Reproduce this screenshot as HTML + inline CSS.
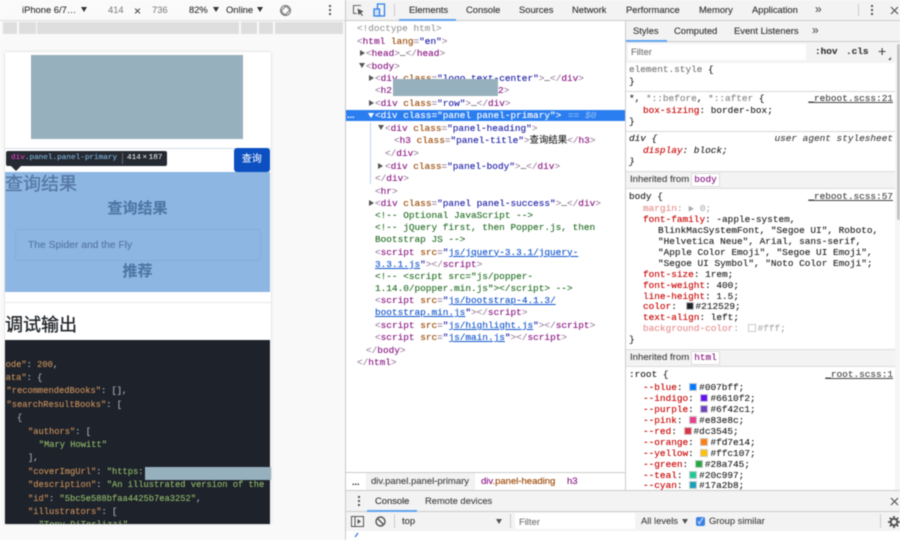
<!DOCTYPE html>
<html lang="zh"><head><meta charset="utf-8"><title>DevTools</title>
<style>
html,body{margin:0;padding:0;width:900px;height:540px;overflow:hidden;background:#fff}
#r{position:absolute;left:0;top:0;width:900px;height:540px;overflow:hidden;filter:blur(.4px);font-family:"Liberation Sans","Noto Sans CJK SC",sans-serif;font-size:9.4px;color:#333;-webkit-text-stroke:.12px}
#r div{position:absolute}
.s{white-space:pre;line-height:12px;height:12px}
.m{font-family:"Liberation Mono","Noto Sans CJK SC",monospace;font-size:9.42px;white-space:pre;line-height:12px;height:12px;color:#222;margin-top:.7px}
.t{color:#881280}.b{color:#9b7f9b}.a{color:#994500}.v{color:#1a1aa6}.c{color:#236e25}.k{color:#c80000}.g{color:#888}
u{color:#1155cc}
.sw{display:inline-block;width:8px;height:8px;margin:0 2px 0 1px;vertical-align:-1px;border:.5px solid #ccc;box-sizing:border-box}
.ln{background:#d8d8d8}
.y{color:#c8905a}.h{color:#8fb86a}.p{color:#aab2bf}
.code{color:#aab2bf;line-height:12px;height:12px;font-family:"Liberation Mono",monospace;font-size:8.75px;white-space:pre;margin-top:.7px}
.tri{width:0;height:0;border-left:3px solid transparent;border-right:3px solid transparent;border-top:5px solid #333}
.rt{width:0;height:0;border-top:3px solid transparent;border-bottom:3px solid transparent;border-left:5px solid #555}
.dn{width:0;height:0;border-left:3px solid transparent;border-right:3px solid transparent;border-top:5px solid #555}
</style></head><body><div id="r">

<!-- left device area -->
<div style="left:0;top:0;width:345px;height:540px;background:#f9f9f9"></div>
<div style="left:0;top:0;width:345px;height:20px;background:#fafafa;border-bottom:1px solid #ddd"></div>
<div class="s" style="left:22px;top:4px;color:#333">iPhone 6/7…</div><div class="tri" style="left:81px;top:7px"></div>
<div class="s" style="left:108px;top:4px;color:#888">414</div>
<div class="s" style="left:134px;top:5px;color:#444;font-size:12px">×</div>
<div class="s" style="left:152px;top:4px;color:#888">736</div>
<div class="s" style="left:189px;top:4px">82%</div><div class="tri" style="left:213px;top:7px"></div>
<div class="s" style="left:226px;top:4px">Online</div><div class="tri" style="left:257px;top:7px"></div>
<svg style="position:absolute;left:279px;top:4px" width="13" height="13" viewBox="0 0 13 13" fill="none" stroke="#777" stroke-width="1"><circle cx="6.5" cy="6.5" r="5"/><path d="M2 7L7 2L11 6L6 11Z"/></svg>
<div style="left:329px;top:5px;width:2px;height:2px;background:#555"></div><div style="left:329px;top:9px;width:2px;height:2px;background:#555"></div><div style="left:329px;top:13px;width:2px;height:2px;background:#555"></div>
<!-- ruler -->
<div style="left:3px;top:22px;width:14px;height:12px;background:#dedede"></div>
<div style="left:19px;top:22px;width:17px;height:12px;background:#dedede"></div>
<div style="left:37px;top:22px;width:202px;height:12px;background:#dedede"></div>
<div style="left:241px;top:22px;width:16px;height:12px;background:#dedede"></div>
<div style="left:259px;top:22px;width:14px;height:12px;background:#dedede"></div>
<div style="left:275px;top:22px;width:68px;height:12px;background:#dedede"></div>

<!-- page -->
<div style="left:5px;top:52px;width:266px;height:472px;background:#fff;box-shadow:0 0 2px rgba(0,0,0,.22);overflow:hidden">
  <div style="left:26px;top:3px;width:212px;height:84px;background:#96b0bd"></div>
  <div style="left:0;top:96px;width:266px;height:1px;background:#d5dde3"></div>
  <div style="left:228.5px;top:96px;width:36.5px;height:24px;background:#0b4fc0;border-radius:3px;color:#e8eefa;font-size:10px;line-height:24px;text-align:center">查询</div>
  <div style="left:0;top:120px;width:265px;height:120px;background:#8db6e3">
    <div style="left:0;top:0;font-size:18px;line-height:24px;color:#5678a3;white-space:pre;-webkit-text-stroke:.3px">查询结果</div>
    <div style="left:0;width:265px;top:26px;font-size:15px;line-height:22px;color:#4f75a3;font-weight:bold;text-align:center">查询结果</div>
    <div style="left:10px;top:57px;width:246px;height:32px;border:1px solid #84aedb;border-radius:3px;box-sizing:border-box"></div>
    <div style="left:23px;top:66.5px;font-size:10.3px;line-height:14px;color:#5878a5;white-space:pre">The Spider and the Fly</div>
    <div style="left:0;width:265px;top:89px;font-size:15px;line-height:22px;color:#4f75a3;font-weight:bold;text-align:center">推荐</div>
  </div>
  <div style="left:0;top:250px;width:266px;height:1px;background:#e8e8e8"></div>
  <div style="left:0;top:261px;font-size:18px;line-height:24px;color:#212529;white-space:pre;-webkit-text-stroke:.3px">调试输出</div>
  <div style="left:0;top:288px;width:265px;height:184px;background:#1e222b;overflow:hidden">
    <div class="code" style="left:-9.9px;top:18px"><span class="y">"code"</span>: <span class="y">200</span>,</div>
    <div class="code" style="left:-9.9px;top:31.4px"><span class="y">"data"</span>: {</div>
    <div class="code" style="left:1.5px;top:44.8px"><span class="y">"recommendedBooks"</span>: [],</div>
    <div class="code" style="left:1.5px;top:58.2px"><span class="y">"searchResultBooks"</span>: [</div>
    <div class="code" style="left:12px;top:71.6px">{</div>
    <div class="code" style="left:23px;top:85px"><span class="y">"authors"</span>: [</div>
    <div class="code" style="left:33.7px;top:98.4px"><span class="h">"Mary Howitt"</span></div>
    <div class="code" style="left:23px;top:111.8px">],</div>
    <div class="code" style="left:23px;top:125.2px"><span class="y">"coverImgUrl"</span>: <span class="h">"https:</span></div>
    <div class="code" style="left:23px;top:138.6px"><span class="y">"description"</span>: <span class="h">"An illustrated version of the classic</span></div>
    <div class="code" style="left:23px;top:152px"><span class="y">"id"</span>: <span class="h">"5bc5e588bfaa4425b7ea3252"</span>,</div>
    <div class="code" style="left:23px;top:165.4px"><span class="y">"illustrators"</span>: [</div>
    <div class="code" style="left:33.7px;top:178.8px"><span class="h">"Tony DiTerlizzi"</span></div>
  </div>
</div>
<div style="left:145px;top:467px;width:126px;height:12.5px;background:#96b0bd"></div>
<!-- tooltip -->
<div class="m" style="left:6px;top:151px;margin-top:0;width:161px;height:15px;background:#252a33;border-radius:2px;line-height:15px;color:#ddd;font-size:7.7px"><span style="position:absolute;left:5px"><span style="color:#e23fc0">div</span><span style="color:#7fb3d8">.panel.panel-primary</span></span><span style="position:absolute;left:116px;top:2px;width:1px;height:11px;background:#666"></span><span style="position:absolute;left:121px;word-spacing:-3px">414 × 187</span></div>
<div style="left:11px;top:166px;width:0;height:0;border-left:5px solid transparent;border-right:5px solid transparent;border-top:5px solid #252a33"></div>

<!-- devtools top -->
<div style="left:345px;top:0;width:1px;height:540px;background:#c8c8c8"></div>
<div style="left:346px;top:0;width:554px;height:20px;background:#f3f3f3;border-bottom:1px solid #ccc"></div>
<svg style="position:absolute;left:352px;top:4px" width="13" height="13" viewBox="0 0 13 13" fill="none"><path d="M9 1.5H1.5V9.5H5" stroke="#666" stroke-width="1.1"/><path d="M5.5 4.5L11.5 7.5L9 8.7L11 11.5L10 12L8 9.5L6.5 11.2Z" fill="#555"/></svg>
<svg style="position:absolute;left:373px;top:3px" width="13" height="14" viewBox="0 0 13 14" fill="none" stroke="#2f7fe6" stroke-width="1.3"><path d="M4.5 1H11.5V13H4.5V1Z"/><path d="M1 6H6.5V13H1V6Z" fill="#cfe2fa"/></svg>
<div style="left:394px;top:4px;width:1px;height:12px;background:#ccc"></div>
<div class="s" style="left:409px;top:4px;color:#333">Elements</div>
<div style="left:399px;top:19px;width:57px;height:2px;background:#5fa3ee"></div>
<div class="s" style="left:466px;top:4px">Console</div>
<div class="s" style="left:519px;top:4px">Sources</div>
<div class="s" style="left:572px;top:4px">Network</div>
<div class="s" style="left:626px;top:4px">Performance</div>
<div class="s" style="left:699px;top:4px">Memory</div>
<div class="s" style="left:752px;top:4px">Application</div>
<div class="s" style="left:815px;top:3px;font-size:12px;color:#555">»</div>
<div style="left:858px;top:4px;width:1px;height:12px;background:#ccc"></div>
<div style="left:871px;top:5px;width:2px;height:2px;background:#555"></div><div style="left:871px;top:9px;width:2px;height:2px;background:#555"></div><div style="left:871px;top:13px;width:2px;height:2px;background:#555"></div>
<svg style="position:absolute;left:890px;top:6px" width="9" height="9" viewBox="0 0 9 9" stroke="#555" stroke-width="1.2"><path d="M1 1L8 8M8 1L1 8"/></svg>

<!-- DOM panel -->
<div style="left:346px;top:21px;width:279px;height:451px;background:#fff"></div>
<div style="left:625px;top:21px;width:1px;height:469px;background:#ccc"></div>
<div style="left:346px;top:110px;width:279px;height:11px;background:#2b7ef0"></div>
<div style="left:370px;top:122px;width:1px;height:62px;background:#bcd4f2"></div>

<div class="m" style="left:357px;top:22px;color:#999">&lt;!doctype html&gt;</div>
<div class="m" style="left:357px;top:35px"><span class="b">&lt;</span><span class="t">html</span> <span class="a">lang</span><span class="b">=</span><span class="v">"en"</span><span class="b">&gt;</span></div>
<div class="rt" style="left:360px;top:50px"></div>
<div class="m" style="left:366px;top:47px"><span class="b">&lt;</span><span class="t">head</span><span class="b">&gt;</span>…<span class="b">&lt;/</span><span class="t">head</span><span class="b">&gt;</span></div>
<div class="dn" style="left:359px;top:63px"></div>
<div class="m" style="left:366px;top:60px"><span class="b">&lt;</span><span class="t">body</span><span class="b">&gt;</span></div>
<div class="rt" style="left:369px;top:75px"></div>
<div class="m" style="left:375px;top:72px"><span class="b">&lt;</span><span class="t">div</span> <span class="a">class</span><span class="b">=</span><span class="v">"logo text-center"</span><span class="b">&gt;</span>…<span class="b">&lt;/</span><span class="t">div</span><span class="b">&gt;</span></div>
<div class="m" style="left:375px;top:84px"><span class="b">&lt;</span><span class="t">h2</span></div>
<div class="m" style="left:498px;top:84px"><span class="t">2</span><span class="b">&gt;</span></div>
<div style="left:393px;top:79px;width:105px;height:17px;background:#96b0bd"></div>
<div class="rt" style="left:369px;top:100px"></div>
<div class="m" style="left:375px;top:97px"><span class="b">&lt;</span><span class="t">div</span> <span class="a">class</span><span class="b">=</span><span class="v">"row"</span><span class="b">&gt;</span>…<span class="b">&lt;/</span><span class="t">div</span><span class="b">&gt;</span></div>

<div class="s" style="left:347px;top:109px;color:#fff;font-size:9px;font-weight:bold">...</div>
<div style="left:368px;top:113px;width:0;height:0;border-left:3px solid transparent;border-right:3px solid transparent;border-top:5px solid #fff"></div>
<div class="m" style="left:375px;top:109.5px;color:#fff">&lt;div class="panel panel-primary"&gt;</div>
<div class="m" style="left:568px;top:109.5px;color:#8fbaf5">== <i>$0</i></div>

<div class="dn" style="left:378px;top:125px"></div>
<div class="m" style="left:385px;top:122px"><span class="b">&lt;</span><span class="t">div</span> <span class="a">class</span><span class="b">=</span><span class="v">"panel-heading"</span><span class="b">&gt;</span></div>
<div class="m" style="left:394px;top:134.5px"><span class="b">&lt;</span><span class="t">h3</span> <span class="a">class</span><span class="b">=</span><span class="v">"panel-title"</span><span class="b">&gt;</span>查询结果<span class="b">&lt;/</span><span class="t">h3</span><span class="b">&gt;</span></div>
<div class="m" style="left:385px;top:147px"><span class="b">&lt;/</span><span class="t">div</span><span class="b">&gt;</span></div>
<div class="rt" style="left:378px;top:163px"></div>
<div class="m" style="left:385px;top:160px"><span class="b">&lt;</span><span class="t">div</span> <span class="a">class</span><span class="b">=</span><span class="v">"panel-body"</span><span class="b">&gt;</span>…<span class="b">&lt;/</span><span class="t">div</span><span class="b">&gt;</span></div>
<div class="m" style="left:375px;top:172px"><span class="b">&lt;/</span><span class="t">div</span><span class="b">&gt;</span></div>
<div class="m" style="left:375px;top:185px"><span class="b">&lt;</span><span class="t">hr</span><span class="b">&gt;</span></div>
<div class="rt" style="left:369px;top:200px"></div>
<div class="m" style="left:375px;top:197px"><span class="b">&lt;</span><span class="t">div</span> <span class="a">class</span><span class="b">=</span><span class="v">"panel panel-success"</span><span class="b">&gt;</span>…<span class="b">&lt;/</span><span class="t">div</span><span class="b">&gt;</span></div>
<div class="m c" style="left:375px;top:209.5px;color:#236e25">&lt;!-- Optional JavaScript --&gt;</div>
<div class="m c" style="left:375px;top:221.5px;color:#236e25">&lt;!-- jQuery first, then Popper.js, then</div>
<div class="m c" style="left:375px;top:233.5px;color:#236e25">Bootstrap JS --&gt;</div>
<div class="m" style="left:375px;top:246px"><span class="b">&lt;</span><span class="t">script</span> <span class="a">src</span><span class="b">=</span><span class="v">"</span><u>js/jquery-3.3.1/jquery-</u></div>
<div class="m" style="left:375px;top:258px"><u>3.3.1.js</u><span class="v">"</span><span class="b">&gt;&lt;/</span><span class="t">script</span><span class="b">&gt;</span></div>
<div class="m c" style="left:375px;top:270.5px;color:#236e25">&lt;!-- &lt;script src="js/popper-</div>
<div class="m c" style="left:375px;top:282px;color:#236e25">1.14.0/popper.min.js"&gt;&lt;/script&gt; --&gt;</div>
<div class="m" style="left:375px;top:294.5px"><span class="b">&lt;</span><span class="t">script</span> <span class="a">src</span><span class="b">=</span><span class="v">"</span><u>js/bootstrap-4.1.3/</u></div>
<div class="m" style="left:375px;top:306.5px"><u>bootstrap.min.js</u><span class="v">"</span><span class="b">&gt;&lt;/</span><span class="t">script</span><span class="b">&gt;</span></div>
<div class="m" style="left:375px;top:319px"><span class="b">&lt;</span><span class="t">script</span> <span class="a">src</span><span class="b">=</span><span class="v">"</span><u>js/highlight.js</u><span class="v">"</span><span class="b">&gt;&lt;/</span><span class="t">script</span><span class="b">&gt;</span></div>
<div class="m" style="left:375px;top:331.5px"><span class="b">&lt;</span><span class="t">script</span> <span class="a">src</span><span class="b">=</span><span class="v">"</span><u>js/main.js</u><span class="v">"</span><span class="b">&gt;&lt;/</span><span class="t">script</span><span class="b">&gt;</span></div>
<div class="m" style="left:366px;top:344px"><span class="b">&lt;/</span><span class="t">body</span><span class="b">&gt;</span></div>
<div class="m" style="left:357px;top:356px"><span class="b">&lt;/</span><span class="t">html</span><span class="b">&gt;</span></div>

<!-- breadcrumbs -->
<div style="left:346px;top:472px;width:279px;height:1px;background:#ccc"></div>
<div style="left:346px;top:473px;width:279px;height:17px;background:#fff"></div>
<div class="s" style="left:352px;top:476px;font-weight:bold;font-size:9px">...</div>
<div style="left:366px;top:473px;width:109px;height:17px;background:#f2f2f2"></div>
<div class="s" style="left:371px;top:476px;color:#444;font-size:9.5px">div.panel.panel-primary</div>
<div class="s" style="left:481px;top:476px;font-size:9.5px"><span class="t">div</span><span class="a">.panel-heading</span></div>
<div class="s t" style="left:567px;top:476px;font-size:9.5px;color:#881280">h3</div>

<!-- styles panel -->
<div style="left:626px;top:21px;width:274px;height:469px;background:#fff"></div>
<div style="left:626px;top:21px;width:274px;height:20px;background:#f3f3f3;border-bottom:1px solid #ccc"></div>
<div class="s" style="left:633px;top:25px">Styles</div>
<div style="left:626px;top:40px;width:41px;height:2px;background:#5fa3ee"></div>
<div class="s" style="left:674px;top:25px">Computed</div>
<div class="s" style="left:734px;top:25px">Event Listeners</div>
<div class="s" style="left:812px;top:24px;font-size:12px;color:#555">»</div>
<div style="left:626px;top:42px;width:269px;height:21px;background:#f3f3f3"></div>
<div style="left:628px;top:44px;width:178px;height:16px;background:#fff"></div>
<div class="s" style="left:631px;top:46px;color:#777">Filter</div>
<div class="m" style="left:815px;top:45.5px;font-weight:bold;color:#333">:hov</div>
<div class="m" style="left:846px;top:45.5px;font-weight:bold;color:#333">.cls</div>
<div class="s" style="left:878px;top:45px;font-size:14px;color:#444">+</div>
<div style="left:888px;top:57px;width:0;height:0;border-left:3px solid transparent;border-bottom:3px solid #555"></div>

<div class="m" style="left:629px;top:63.5px;color:#777">element.style <span style="color:#222">{</span></div>
<div class="m" style="left:629px;top:75.5px">}</div>
<div class="ln" style="left:626px;top:91px;width:269px;height:1px"></div>
<div class="m" style="left:629px;top:92.5px"><span>*</span>, <span class="g">*::before</span>, <span class="g">*::after</span> {</div>
<div class="m" style="left:808px;top:92.5px;width:85px;text-align:right;text-decoration:underline;color:#444">_reboot.scss:21</div>
<div class="m" style="left:643px;top:104.5px"><span class="k">box-sizing</span>: border-box;</div>
<div class="m" style="left:629px;top:115.5px">}</div>
<div class="ln" style="left:626px;top:131px;width:269px;height:1px"></div>
<div class="m" style="left:629px;top:132.5px"><i>div {</i></div>
<div class="m" style="left:749px;top:132.5px;width:144px;text-align:right;color:#444"><i>user agent stylesheet</i></div>
<div class="m" style="left:643px;top:144.5px"><i><span class="k">display</span>: block;</i></div>
<div class="m" style="left:629px;top:155.5px"><i>}</i></div>
<div style="left:626px;top:171px;width:269px;height:18px;background:#f3f3f3;border-top:1px solid #ddd;border-bottom:1px solid #ddd;box-sizing:border-box"></div>
<div class="s" style="left:630px;top:174px;color:#444;font-size:9.6px">Inherited from</div>
<div class="m" style="left:691px;top:173px;margin-top:0;width:29px;height:14px;background:#fff;border:1px solid #ddd;box-sizing:border-box;line-height:12px;text-align:center;color:#881280">body</div>

<div class="m" style="left:629px;top:190.5px">body {</div>
<div class="m" style="left:808px;top:190.5px;width:85px;text-align:right;text-decoration:underline;color:#444">_reboot.scss:57</div>
<div class="m" style="left:643px;top:202.5px;color:#aaa"><span style="color:#e58f8f">margin</span>: <span style="font-size:6px">▶</span> 0;</div>
<div class="m" style="left:643px;top:213.5px"><span class="k">font-family</span>: -apple-system,</div>
<div class="m" style="left:658px;top:224.5px">BlinkMacSystemFont, "Segoe UI", Roboto,</div>
<div class="m" style="left:658px;top:235.5px">"Helvetica Neue", Arial, sans-serif,</div>
<div class="m" style="left:658px;top:246.5px">"Apple Color Emoji", "Segoe UI Emoji",</div>
<div class="m" style="left:658px;top:257.5px">"Segoe UI Symbol", "Noto Color Emoji";</div>
<div class="m" style="left:643px;top:268.5px"><span class="k">font-size</span>: 1rem;</div>
<div class="m" style="left:643px;top:279px"><span class="k">font-weight</span>: 400;</div>
<div class="m" style="left:643px;top:290px"><span class="k">line-height</span>: 1.5;</div>
<div class="m" style="left:643px;top:300.5px"><span class="k">color</span>: <span class="sw" style="background:#212529;margin-left:3px"></span>#212529;</div>
<div class="m" style="left:643px;top:311.5px"><span class="k">text-align</span>: left;</div>
<div class="m" style="left:643px;top:322.5px;color:#aaa"><span style="color:#e58f8f">background-color</span>: <span class="sw" style="background:#fff;margin-left:3px"></span>#fff;</div>
<div class="m" style="left:629px;top:333.5px">}</div>
<div style="left:626px;top:349px;width:269px;height:18px;background:#f3f3f3;border-top:1px solid #ddd;border-bottom:1px solid #ddd;box-sizing:border-box"></div>
<div class="s" style="left:630px;top:352px;color:#444;font-size:9.6px">Inherited from</div>
<div class="m" style="left:691px;top:351px;margin-top:0;width:29px;height:14px;background:#fff;border:1px solid #ddd;box-sizing:border-box;line-height:12px;text-align:center;color:#881280">html</div>

<div class="m" style="left:629px;top:368.5px">:root {</div>
<div class="m" style="left:808px;top:368.5px;width:85px;text-align:right;text-decoration:underline;color:#444">_root.scss:1</div>
<div style="left:626px;top:381px;width:269px;height:109px;overflow:hidden">
<div class="m" style="left:17px;top:0"><span class="k">--blue</span>: <span class="sw" style="background:#007bff"></span>#007bff;</div>
<div class="m" style="left:17px;top:11px"><span class="k">--indigo</span>: <span class="sw" style="background:#6610f2"></span>#6610f2;</div>
<div class="m" style="left:17px;top:22px"><span class="k">--purple</span>: <span class="sw" style="background:#6f42c1"></span>#6f42c1;</div>
<div class="m" style="left:17px;top:33px"><span class="k">--pink</span>: <span class="sw" style="background:#e83e8c"></span>#e83e8c;</div>
<div class="m" style="left:17px;top:44px"><span class="k">--red</span>: <span class="sw" style="background:#dc3545"></span>#dc3545;</div>
<div class="m" style="left:17px;top:55px"><span class="k">--orange</span>: <span class="sw" style="background:#fd7e14"></span>#fd7e14;</div>
<div class="m" style="left:17px;top:66px"><span class="k">--yellow</span>: <span class="sw" style="background:#ffc107"></span>#ffc107;</div>
<div class="m" style="left:17px;top:77px"><span class="k">--green</span>: <span class="sw" style="background:#28a745"></span>#28a745;</div>
<div class="m" style="left:17px;top:88px"><span class="k">--teal</span>: <span class="sw" style="background:#20c997"></span>#20c997;</div>
<div class="m" style="left:17px;top:98.5px"><span class="k">--cyan</span>: <span class="sw" style="background:#17a2b8"></span>#17a2b8;</div>
</div>
<!-- scrollbar -->
<div style="left:895px;top:42px;width:5px;height:448px;background:#f5f5f5"></div>
<div style="left:897px;top:44px;width:3px;height:176px;background:#c4c4c4;border-radius:2px"></div>

<!-- drawer -->
<div style="left:346px;top:490px;width:554px;height:1px;background:#ccc"></div>
<div style="left:346px;top:491px;width:554px;height:20px;background:#f3f3f3;border-bottom:1px solid #ccc"></div>
<div style="left:358px;top:496px;width:2px;height:2px;background:#555"></div><div style="left:358px;top:500px;width:2px;height:2px;background:#555"></div><div style="left:358px;top:504px;width:2px;height:2px;background:#555"></div>
<div class="s" style="left:375px;top:495px">Console</div>
<div style="left:367px;top:510px;width:50px;height:2px;background:#5fa3ee"></div>
<div class="s" style="left:425px;top:495px;color:#444">Remote devices</div>
<svg style="position:absolute;left:890px;top:497px" width="9" height="9" viewBox="0 0 9 9" stroke="#555" stroke-width="1.2"><path d="M1 1L8 8M8 1L1 8"/></svg>
<div style="left:346px;top:512px;width:554px;height:19px;background:#f3f3f3;border-bottom:1px solid #ccc"></div>
<svg style="position:absolute;left:351px;top:516px" width="13" height="11" viewBox="0 0 13 11" fill="none" stroke="#555"><rect x=".5" y=".5" width="12" height="10"/><path d="M4 .5V10.5"/><path d="M6.5 3L10 5.5L6.5 8Z" fill="#555" stroke="none"/></svg>
<svg style="position:absolute;left:375px;top:516px" width="11" height="11" viewBox="0 0 11 11" fill="none" stroke="#555" stroke-width="1.4"><circle cx="5.5" cy="5.5" r="4.5"/><path d="M2.3 2.3L8.7 8.7"/></svg>
<div style="left:394px;top:514px;width:1px;height:14px;background:#ccc"></div>
<div class="s" style="left:402px;top:515px">top</div>
<div class="dn" style="left:496px;top:519px"></div>
<div style="left:510px;top:514px;width:1px;height:14px;background:#ccc"></div>
<div style="left:515px;top:513px;width:120px;height:16px;background:#fff"></div>
<div class="s" style="left:519px;top:516px;color:#777">Filter</div>
<div class="s" style="left:641px;top:515px;color:#444">All levels</div>
<div class="dn" style="left:682px;top:519px"></div>
<div style="left:696px;top:517px;width:9px;height:9px;background:#3b82e6;border-radius:2px;color:#fff;font-size:8px;line-height:9px;text-align:center">✓</div>
<div class="s" style="left:709px;top:515px;color:#444">Group similar</div>
<div style="left:880px;top:514px;width:1px;height:14px;background:#ccc"></div>
<svg style="position:absolute;left:888px;top:516px" width="12" height="12" viewBox="0 0 12 12"><circle cx="6" cy="6" r="3.3" fill="none" stroke="#555" stroke-width="2"/><path d="M6 0V2.5M6 9.5V12M0 6H2.5M9.5 6H12M1.8 1.8L3.5 3.5M8.5 8.5L10.2 10.2M1.8 10.2L3.5 8.5M8.5 3.5L10.2 1.8" stroke="#555" stroke-width="1.8"/></svg>
<div style="left:346px;top:531px;width:554px;height:9px;background:#fff"></div>
<svg style="position:absolute;left:354px;top:532px" width="5" height="6" viewBox="0 0 5 6" fill="none" stroke="#2f6fdc" stroke-width="1.2"><path d="M1 5L4 1"/></svg>
</div></body></html>
